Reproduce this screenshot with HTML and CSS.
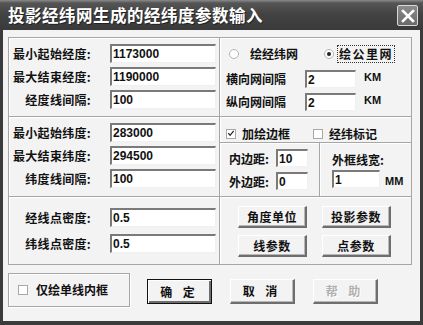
FILE: index.html
```html
<!DOCTYPE html>
<html lang="zh">
<head>
<meta charset="utf-8">
<link rel="stylesheet" href="styles.css">
</head>
<body>
<div class="window">
  <div class="titlebar">
    <span class="title">投影经纬网生成的经纬度参数输入</span>
    <span class="close"><svg width="14" height="14" viewBox="0 0 14 14"><path d="M2 2 L12 12 M12 2 L2 12" stroke="#fff" stroke-width="2.6" stroke-linecap="square"/></svg></span>
  </div>
  <div class="client">
    <div class="grid">
      <div class="cell fields">
        <label class="lbl">最小起始经度:</label><div class="input">1173000</div>
        <label class="lbl">最大结束经度:</label><div class="input">1190000</div>
        <label class="lbl">经度线间隔:</label><div class="input">100</div>
      </div>
      <div class="cell rt">
        <div class="radios">
          <span class="opt"><span class="radio"></span><span class="txt">绘经纬网</span></span>
          <span class="opt opt2"><span class="radio on"></span><span class="txt focus">绘公里网</span></span>
        </div>
        <div class="krow"><span class="klbl">横向网间隔</span><div class="input kin">2</div><span class="unit">KM</span></div>
        <div class="krow"><span class="klbl">纵向网间隔</span><div class="input kin">2</div><span class="unit">KM</span></div>
      </div>
      <div class="cell fields">
        <label class="lbl">最小起始纬度:</label><div class="input">283000</div>
        <label class="lbl">最大结束纬度:</label><div class="input">294500</div>
        <label class="lbl">纬度线间隔:</label><div class="input">100</div>
      </div>
      <div class="cell rm">
        <div class="checks">
          <span class="opt"><span class="check on"><svg width="9" height="9" viewBox="0 0 9 9"><path d="M1.5 4 L3.5 6.5 L7.5 1.5" fill="none" stroke="#222" stroke-width="1.4"/></svg></span><span class="txt">加绘边框</span></span>
          <span class="opt opt2"><span class="check"></span><span class="txt">经纬标记</span></span>
        </div>
        <div class="sub">
          <div class="subl">
            <div class="mrow"><span class="mlbl">内边距:</span><div class="input min">10</div></div>
            <div class="mrow"><span class="mlbl">外边距:</span><div class="input min">0</div></div>
          </div>
          <div class="subr">
            <span class="mlbl">外框线宽:</span>
            <div class="mrow"><div class="input win">1</div><span class="unit">MM</span></div>
          </div>
        </div>
      </div>
      <div class="cell fields f3">
        <label class="lbl">经线点密度:</label><div class="input">0.5</div>
        <label class="lbl">纬线点密度:</label><div class="input">0.5</div>
      </div>
      <div class="cell rb">
        <button class="btn">角度单位</button>
        <button class="btn">投影参数</button>
        <button class="btn">线参数</button>
        <button class="btn">点参数</button>
      </div>
    </div>
    <div class="bottom">
      <div class="group">
        <span class="check"></span><span class="txt">仅绘单线内框</span>
      </div>
      <button class="btn big def">确 定</button>
      <button class="btn big">取 消</button>
      <button class="btn big dis">帮 助</button>
    </div>
  </div>
</div>
</body>
</html>
```

FILE: styles.css
```css
* { box-sizing: border-box; }
html, body { margin: 0; padding: 0; }
body {
  width: 423px;
  height: 325px;
  overflow: hidden;
  font-family: "Noto Sans CJK SC", "Liberation Sans", sans-serif;
  font-weight: 700;
  font-size: 12px;
  color: #111;
}
.window {
  width: 423px;
  height: 325px;
  background: #3b3b3b;
  padding: 0 3px 4px 3px;
  display: flex;
  flex-direction: column;
}
.titlebar {
  height: 30px;
  margin: 0 -3px;
  padding: 0 5px 0 8px;
  display: flex;
  align-items: center;
  justify-content: space-between;
  background: linear-gradient(#8a8a8a 0, #555 3px, #434343 14px, #3a3a3a 30px);
}
.title {
  color: #fff;
  font-size: 16.5px;
  line-height: 20px;
  letter-spacing: 0.5px;
  text-shadow: 1px 1px 0 #222;
}
.close {
  width: 21px;
  height: 21px;
  margin-top: 1px;
  border: 1px solid #d8d8d8;
  border-radius: 2px;
  background: linear-gradient(#8c8c8c, #6a6a6a);
  display: flex;
  align-items: center;
  justify-content: center;
}
.client {
  flex: 1;
  background: #f3f3f3;
  padding: 7px 8px 0 5px;
}
.grid {
  display: grid;
  grid-template-columns: 211px 192px;
  grid-template-rows: 79px 80px 68px;
  border-top: 1px solid #a6a6a6;
  border-left: 1px solid #a6a6a6;
  box-shadow: inset 1px 1px 0 #fff;
}
.cell {
  border-right: 1px solid #a6a6a6;
  border-bottom: 1px solid #a6a6a6;
  box-shadow: inset 1px 1px 0 #fff;
}
.input {
  background: #fff;
  height: 19px;
  border-style: solid;
  border-width: 2px 1px 1px 2px;
  border-color: #7a7a7a #f0f0f0 #f0f0f0 #7a7a7a;
  font-family: "Liberation Sans", sans-serif;
  font-weight: 700;
  font-size: 12px;
  line-height: 16px;
  padding-left: 1px;
  color: #111;
}
.fields {
  display: grid;
  grid-template-columns: 94px 106px;
  column-gap: 7px;
  row-gap: 4px;
  align-content: start;
  padding: 6px 0 0 0;
}
.f3 { padding-top: 11px; row-gap: 7px; }
.lbl {
  text-align: right;
  line-height: 19px;
  white-space: nowrap;
  padding-right: 12px;
  letter-spacing: 0.3px;
}
.rt { padding: 8px 0 0 6px; }
.radios, .checks { display: flex; height: 16px; align-items: center; }
.opt { display: flex; align-items: center; }
.opt2 { margin-left: 23px; }
.radio {
  width: 10px;
  height: 10px;
  border-radius: 50%;
  border: 1px solid #b4b4b4;
  background: #fff;
  margin: 0 11px 0 3px;
  position: relative;
}
.radio.on::after {
  content: "";
  position: absolute;
  left: 2px;
  top: 2px;
  width: 4px;
  height: 4px;
  border-radius: 50%;
  background: #222;
}
.opt2 .radio { margin-right: 4px; }
.txt { line-height: 16px; white-space: nowrap; }
.focus { outline: 1px dotted #333; outline-offset: 0; padding: 0 1px; letter-spacing: 1.5px; }
.krow { display: flex; align-items: center; margin-top: 5px; }
.rt .krow:nth-child(2) { margin-top: 8px; }
.klbl { width: 79px; line-height: 18px; }
.kin { width: 51px; height: 18px; }
.unit {
  font-family: "Liberation Sans", sans-serif;
  font-size: 11px;
  font-weight: 700;
  margin-left: 8px;
  margin-top: -4px;
}
.rm { display: flex; flex-direction: column; }
.checks { padding: 8px 0 0 6px; height: 26px; border-bottom: 1px solid #a6a6a6; box-shadow: 0 1px 0 #fff; }
.check {
  width: 10px;
  height: 10px;
  border: 1px solid #a8a8a8;
  background: #fff;
  margin-right: 6px;
  display: flex;
  align-items: center;
  justify-content: center;
}
.checks .opt2 { margin-left: 23px; }
.sub { flex: 1; display: flex; }
.subl { width: 100px; border-right: 1px solid #a6a6a6; box-shadow: 1px 0 0 #fff; padding: 6px 0 0 9px; }
.subr { padding: 8px 0 0 12px; display: flex; flex-direction: column; }
.mrow { display: flex; align-items: center; margin-bottom: 5px; }
.mlbl { width: 47px; line-height: 17px; white-space: nowrap; }
.min { width: 32px; height: 18px; }
.win { width: 48px; height: 18px; margin-top: 2px; }
.subr .unit { margin-left: 5px; margin-top: 6px; }
.rb {
  display: grid;
  grid-template-columns: 69px 69px;
  grid-template-rows: 22px 22px;
  column-gap: 15px;
  row-gap: 7px;
  padding: 9px 0 0 18px;
  align-content: start;
}
.btn {
  font-family: "Noto Sans CJK SC", sans-serif;
  font-weight: 700;
  font-size: 12px;
  color: #111;
  background: #f3f3f3;
  border-style: solid;
  border-width: 1px 2px 2px 1px;
  border-color: #fff #6e6e6e #6e6e6e #fff;
  box-shadow: inset -1px -1px 0 #b8b8b8;
  padding: 0;
  line-height: 16px;
  letter-spacing: 0.5px;
}
.bottom {
  display: flex;
  align-items: flex-start;
  margin-top: 8px;
}
.group {
  width: 122px;
  height: 34px;
  border: 1px solid #a6a6a6;
  box-shadow: inset 1px 1px 0 #fff, 1px 1px 0 #fff;
  display: flex;
  align-items: center;
  padding-left: 9px;
}
.group .check { margin-right: 8px; }
.big {
  width: 65px;
  height: 25px;
  margin-top: 6px;
  margin-left: 18px;
  letter-spacing: 4px;
}
.def {
  margin-left: 17px;
  border: 1px solid #111;
  box-shadow: inset 1px 1px 0 #fff, inset -2px -2px 0 #6e6e6e;
}
.dis { color: #b0b0b0; text-shadow: 1px 1px 0 #fff; }
```
